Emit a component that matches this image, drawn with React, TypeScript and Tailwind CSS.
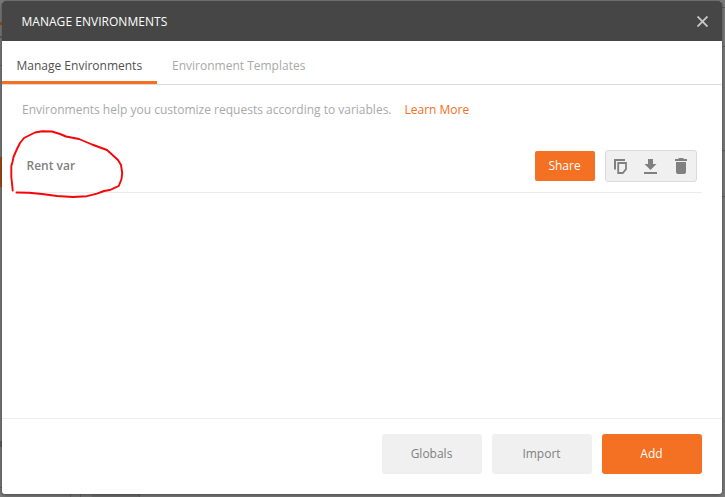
import React from "react";

const tool = "flex h-full w-[30px] items-center justify-center";

function CopyIcon() {
  return (
    <svg width="14" height="16" viewBox="0 0 14 16" fill="none" stroke="#808080" strokeWidth="2">
      <path d="M1 11.5V2H11" />
      <path d="M4.2 5H12V11.2L8.8 15H4.2Z" strokeWidth="1.8" />
    </svg>
  );
}

function DownloadIcon() {
  return (
    <svg width="14" height="16" viewBox="0 0 14 16" fill="#808080">
      <path d="M4 1H9V6H12.5L6.5 12L.5 6H4ZM0 14H13V16H0Z" />
    </svg>
  );
}

function TrashIcon() {
  return (
    <svg width="12" height="16" viewBox="0 0 12 16" fill="#808080">
      <path d="M0 1H3L4 0H8L9 1H12V3H0ZM1 4H11V14Q11 16 9 16H3Q1 16 1 14Z" />
    </svg>
  );
}

function Modal() {
  return (
    <section className="flex h-[493px] w-[720px] flex-col overflow-hidden rounded-[3px] bg-white shadow-[0_1px_5px_rgba(0,0,0,0.5)]">
      <header className="flex h-10 shrink-0 items-center justify-between bg-[#464646] pl-[19.5px] pr-[14.5px] text-white">
        <h1 className="pt-[2px] text-[12px] font-medium leading-4 tracking-[0.03px]">MANAGE ENVIRONMENTS</h1>
        <svg width="11" height="11" viewBox="0 0 11 11" stroke="#c6c6c6" strokeWidth="1.9">
          <path d="M.5.5L10.5 10.5M10.5.5L.5 10.5" />
        </svg>
      </header>
      <nav className="flex h-11 shrink-0 border-b border-[#dbdbdb] text-[12px] leading-4">
        <div className="h-[43px] w-[155px] whitespace-nowrap border-b-[3px] border-[#f47023] pl-[14.5px] pt-[17px] text-[#505050]">Manage Environments</div>
        <div className="whitespace-nowrap pl-[15px] pt-[17px] text-[#a9a9a9]">Environment Templates</div>
      </nav>
      <main className="flex min-h-0 flex-1 flex-col px-5 pt-[17px]">
        <p className="flex h-4 gap-[13px] whitespace-nowrap text-[12px] leading-4 text-[#a9a9a9]">
          <span>Environments help you customize requests according to variables.</span>
          <span className="text-[#f47023]">Learn More</span>
        </p>
        <div className="mt-[22px] flex h-[53px] items-center border-b border-[#ececec] px-[5px]">
          <span className="-ml-[0.5px] flex-1 text-[12px] font-semibold leading-4 text-[#808080]">Rent var</span>
          <button className="h-[30px] w-[60px] rounded-[2px] bg-[#f47023] pr-px text-[12px] font-medium text-white">Share</button>
          <div className="ml-[10px] flex h-8 w-[92px] rounded-[3px] border border-[#dbdbdb] bg-[#f0f0f0]">
            <div className={tool}><CopyIcon /></div>
            <div className={tool}><DownloadIcon /></div>
            <div className={tool}><TrashIcon /></div>
          </div>
        </div>
      </main>
      <footer className="flex h-[76px] shrink-0 justify-end gap-[10px] border-t border-[#ececec] px-5 pt-[15px] text-[12px]">
        <button className="h-10 w-[100px] rounded-[3px] bg-[#f0f0f0] pr-px text-[#808080]">Globals</button>
        <button className="h-10 w-[100px] rounded-[3px] bg-[#f0f0f0] pr-px text-[#808080]">Import</button>
        <button className="h-10 w-[100px] rounded-[3px] bg-[#f47023] pr-px font-medium text-white">Add</button>
      </footer>
    </section>
  );
}

export default function App() {
  return (
    <div className="relative h-[497px] w-[725px] overflow-hidden bg-[#7f7f7f] pl-[2px] pt-px font-['Open_Sans',sans-serif]">
      <svg className="absolute inset-0" width="725" height="497">
        <path d="M0 22H2V25H0ZM0 157H2V187H0Z" fill="#a54c1b" />
        <path d="M0 36H2V38H0ZM0 441H2V447H0ZM139 494H140V497H139ZM722 7H725V8H722ZM722 46H725V47H722ZM722 150H725V151H722ZM722 196H725V197H722Z" fill="#626262" />
        <path d="M92 494H139V497H92Z" fill="#747474" />
        <path d="M70 494H71V497H70ZM80 494H81V497H80ZM0 65H2V66H0ZM0 487H2V488H0Z" fill="#686868" />
      </svg>
      <div className="relative"><Modal /></div>
      <svg className="pointer-events-none absolute left-0 top-[120px]" width="130" height="85" viewBox="0 120 130 85" fill="none" stroke="#f50508" strokeWidth="1.9" strokeLinecap="round" strokeLinejoin="round">
        <path d="M12.7 190.5L12.2 185L11.3 177V166L12.5 162L13.5 157L17 149L20 143L24 138L29 135.5L35 132.5L42 131.3L52 131.5L60 134L66 136.5L79 139L92 144.5L107 150L112 154.5L118 160L121 165L122.2 173L121.5 179L118.8 186L114 188.2L110 190L104 191L97 193.7L87 196.2L73 197L57 196L42 194L29 192.8L16.5 192.5" />
      </svg>
    </div>
  );
}
